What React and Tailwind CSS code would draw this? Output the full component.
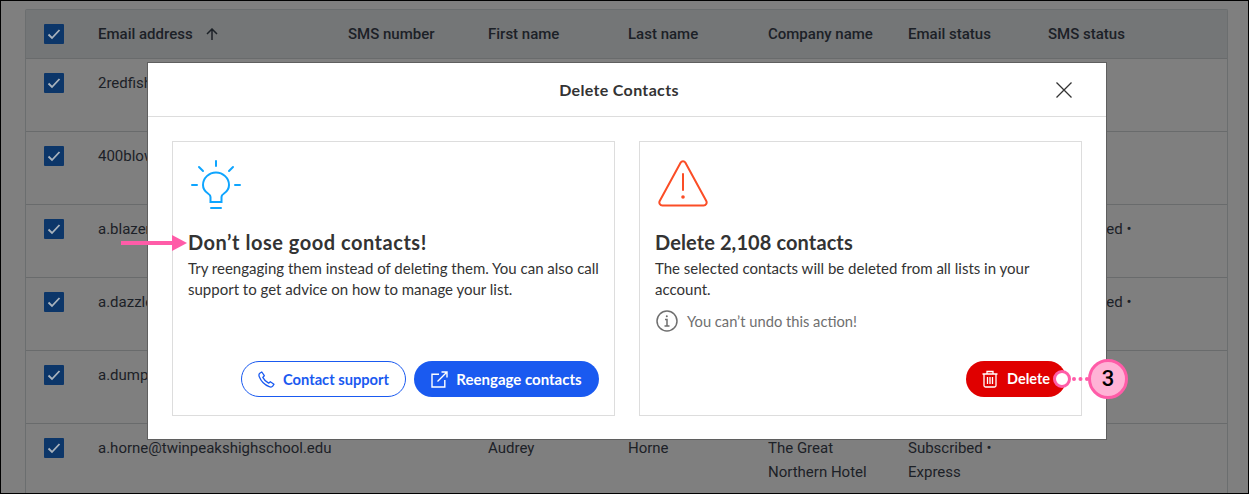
import React from 'react';

const columns = ['SMS number', 'First name', 'Last name', 'Company name', 'Email status', 'SMS status'];
const rowClass = 'grid grid-cols-[72px_250px_140px_140px_140px_140px_140px_1fr]';

const rows = [
  { email: '2redfish', first: '', last: '', company: '', status: '', sms: '' },
  { email: '400blows', first: '', last: '', company: '', status: '', sms: '' },
  { email: 'a.blazer', first: '', last: '', company: '', status: '', sms: 'Subscribed •' },
  { email: 'a.dazzle', first: '', last: '', company: '', status: '', sms: 'Subscribed •' },
  { email: 'a.dumps', first: '', last: '', company: '', status: '', sms: '' },
  { email: 'a.horne@twinpeakshighschool.edu', first: 'Audrey', last: 'Horne', company: 'The Great Northern Hotel', status: 'Subscribed • Express', sms: '' },
];

const CheckBox = () => (
  <div className="w-5 h-5 rounded-[1px] bg-[#0c3669] flex items-center justify-center">
    <svg width="14" height="12" viewBox="0 0 14 12" fill="none" stroke="#a9b3bd" strokeWidth="1.8">
      <path d="M1.5 6.5 L5 10 L12.5 2" />
    </svg>
  </div>
);

const BulbIcon = () => (
  <svg width="50" height="50" viewBox="0 0 50 50" fill="none" stroke="#0ea5ff" strokeWidth="2">
    <path d="M25 1 V6 M8 7 L12 11 M42 7 L38 11 M1 25 H6 M44 25 H49" strokeLinecap="round" />
    <path d="M19.500 42 V37 C19.500 35.500 18.500 34.500 17 33.500 C14 31.500 12 28.500 12 25 C12 18 18 12.500 25 12.500 C32 12.500 38 18 38 25 C38 28.500 36 31.500 33 33.500 C31.500 34.500 30.500 35.500 30.500 37 V42 Z" />
    <path d="M20 48 H30" strokeLinecap="round" />
  </svg>
);

const WarningIcon = () => (
  <svg width="50" height="48" viewBox="0 0 50 48" fill="none" stroke="#fb4d26" strokeWidth="2">
    <path d="M22.700 2.500 C23.700 0.900 26.300 0.900 27.300 2.500 L48.300 41 C49.300 43 48 45.500 45.600 45.500 H4.400 C2 45.500 0.700 43 1.700 41 Z" strokeLinejoin="round" />
    <path d="M25 14 V30" strokeLinecap="round" />
    <circle cx="25" cy="37" r="1.800" fill="#fb4d26" stroke="none" />
  </svg>
);

const InfoIcon = () => (
  <svg width="22" height="22" viewBox="0 0 22 22" fill="none" stroke="#6f6f6f" strokeWidth="1.500">
    <circle cx="11" cy="11" r="10" />
    <path d="M9 9.500 H11 V16 M8.500 16 H13.500" />
    <circle cx="10.800" cy="6.300" r="1" fill="#6f6f6f" stroke="none" />
  </svg>
);

const PhoneIcon = () => (
  <svg width="17" height="17" viewBox="0 0 17 17" fill="none" stroke="#1a5af0" strokeWidth="1.300">
    <path d="M3.800 1 L1.800 2.300 C0.800 3.100 0.800 4.500 1.300 5.800 C3 10.200 6.800 14 11.200 15.700 C12.500 16.200 13.900 16.200 14.700 15.200 L16 13.200 L12.300 10.700 L10.600 12.200 C8.300 11 6 8.700 4.800 6.400 L6.300 4.700 Z" strokeLinejoin="round" />
  </svg>
);

const ExternalIcon = () => (
  <svg width="17" height="17" viewBox="0 0 17 17" fill="none" stroke="#ffffff" strokeWidth="1.400">
    <path d="M8 3.200 H1 V16 H13.800 V9" />
    <path d="M6.500 10.500 L16 1 M10.500 1 H16 V6.500" />
  </svg>
);

const TrashIcon = () => (
  <svg width="16" height="18" viewBox="0 0 16 18" fill="none" stroke="#ffffff" strokeWidth="1.300">
    <path d="M0.500 4 H15.500 M5 4 V1.500 H11 V4" />
    <path d="M2 4 V15.500 C2 16.500 2.700 17 3.500 17 H12.500 C13.300 17 14 16.500 14 15.500 V4" />
    <path d="M5.500 7 V14 M8 7 V14 M10.500 7 V14" />
  </svg>
);

const CloseIcon = () => (
  <svg width="16" height="16" viewBox="0 0 16 16" fill="none" stroke="#333333" strokeWidth="1.300">
    <path d="M0.500 0.500 L15.500 15.500 M15.500 0.500 L0.500 15.500" />
  </svg>
);

const App = () => {
  return (
    <div className="relative w-[1249px] h-[494px] overflow-hidden border border-black bg-[#7f7f7f] font-['Roboto',sans-serif] text-[15px] leading-6 text-[#1c2127]">
      {/* contacts table behind the dialog */}
      <div className="ml-6 mt-[8px] mr-5 border-x border-t border-[#6b6e6f] rounded-t-[2px]">
        <div className={`${rowClass} h-[49px] items-center bg-[#747677] border-b border-[#696b6c] font-medium`}>
          <div className="pl-[18px]"><CheckBox /></div>
          <div className="flex items-center gap-[13px]">
            Email address
            <svg width="12" height="12" viewBox="0 0 12 12" fill="none" stroke="#1c2127" strokeWidth="1.500">
              <path d="M6 12 V1 M1 6 L6 1 L11 6" />
            </svg>
          </div>
          {columns.map(name => (
            <div key={name}>{name}</div>
          ))}
        </div>
        {rows.map(row => (
          <div key={row.email} className={`${rowClass} h-[73px] pt-[12px] border-b border-[#696b6c]`}>
            <div className="pl-[18px] pt-[2px]"><CheckBox /></div>
            <div className="whitespace-nowrap">{row.email}</div>
            <div></div>
            <div>{row.first}</div>
            <div>{row.last}</div>
            <div className="pr-6">{row.company}</div>
            <div className="pr-10">{row.status}</div>
            <div>{row.sms}</div>
          </div>
        ))}
      </div>

      {/* dialog */}
      <div className="absolute left-[146px] top-[61px] w-[960px] h-[378px] bg-white border border-[#5f5f5f] font-['Lato',sans-serif] text-[#333333]">
        <div className="relative h-[54px] pr-4 border-b border-[#dddddd] flex items-center justify-center text-[16px] font-bold tracking-[0.33px]">
          Delete Contacts
          <div className="absolute right-[34px] top-[19px]"><CloseIcon /></div>
        </div>
        <div className="grid grid-cols-2 gap-6 px-6 pt-6">
          <div className="h-[275px] border border-[#dddddd] px-[15px] pt-[18px] flex flex-col">
            <div className="pl-[3px] h-[50px]"><BulbIcon /></div>
            <h2 className="mt-[18px] text-[20px] leading-7 font-bold tracking-[0.52px]">Don’t lose good contacts!</h2>
            <p className="mt-[2px] text-[15px] leading-[21px]">Try reengaging them instead of deleting them. You can also call support to get advice on how to manage your list.</p>
            <div className="mt-auto mb-[18px] flex justify-end gap-2">
              <button className="h-9 w-[165px] rounded-full border border-[#1a5af0] flex items-center justify-center gap-[8px] text-[14.700px] font-bold text-[#1a5af0]">
                <PhoneIcon />Contact support
              </button>
              <button className="h-9 w-[185px] rounded-full bg-[#1a5af0] flex items-center justify-center gap-[8px] text-[15px] font-bold text-white">
                <ExternalIcon />Reengage contacts
              </button>
            </div>
          </div>
          <div className="h-[275px] border border-[#dddddd] px-[15px] pt-[18px] flex flex-col">
            <div className="pl-[3px] h-[50px]"><WarningIcon /></div>
            <h2 className="mt-[18px] text-[20px] leading-7 font-bold tracking-[0.1px]">Delete 2,108 contacts</h2>
            <p className="mt-[2px] text-[15px] leading-[21px] pr-8">The selected contacts will be deleted from all lists in your account.</p>
            <div className="mt-[9px] pl-px flex items-center gap-[9px] text-[14.700px] text-[#6f6f6f]">
              <InfoIcon />You can’t undo this action!
            </div>
            <div className="mt-auto mb-[18px] flex justify-end">
              <button className="h-9 w-[100px] rounded-full bg-[#e00000] flex items-center gap-[9px] pl-4 text-[14.500px] font-bold text-white">
                <TrashIcon />Delete
              </button>
            </div>
          </div>
        </div>
      </div>

      {/* pink annotations */}
      <div className="absolute left-[120px] top-[234px] flex items-center">
        <div className="w-[51px] h-[4px] bg-[#ff5ca8]"></div>
        <div className="w-0 h-0 border-y-[8px] border-y-transparent border-l-[15px] border-l-[#ff5ca8]"></div>
      </div>
      <div className="absolute left-[1052px] top-[369px] w-[18px] h-[18px] rounded-full bg-white border-[3px] border-[#ff5ca8]"></div>
      <div className="absolute left-[1071px] top-[376px] w-[17px] border-t-4 border-dotted border-[#ff5ca8]"></div>
      <div className="absolute left-[1087px] top-[358px] w-10 h-10 rounded-full bg-[#ffb3d6] border-[3px] border-[#ff5ca8] flex items-center justify-center font-['Roboto',sans-serif] text-[22px] font-medium text-black">
        3
      </div>
    </div>
  );
};

export default App;
